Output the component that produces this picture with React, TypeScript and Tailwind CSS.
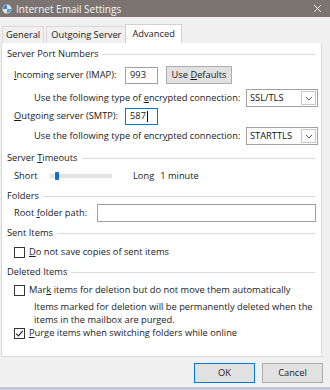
import React from "react";

const U = ({ children }: { children: React.ReactNode }) => <span className="underline underline-offset-[1px]">{children}</span>;

function GroupHeader({ title }: { title: React.ReactNode }) {
  return (
    <div className="flex h-[14px] items-center pl-[5px] pr-[6px]">
      <span className="whitespace-nowrap text-[#1a1a1a]">{title}</span>
      <div className="ml-[4px] h-px flex-1 bg-[#d9d9d9]" />
    </div>
  );
}

function Checkbox({ checked }: { checked?: boolean }) {
  return (
    <div className="flex h-[11px] w-[11px] shrink-0 items-center justify-center border border-[#333] bg-white">
      {checked && (
        <svg width="9" height="9" viewBox="0 0 9 9">
          <path d="M1.2 4.6 L3.4 6.9 L7.8 1.8" fill="none" stroke="#222" strokeWidth="1.1" />
        </svg>
      )}
    </div>
  );
}

function Select({ value }: { value: string }) {
  return (
    <div className="flex h-[18px] w-[72px] items-stretch border border-[#a0a0a0] bg-white">
      <div className="flex flex-1 items-center pl-[3px] text-[#111]">{value}</div>
      <div className="my-[1px] mr-[1px] flex w-[15px] items-center justify-center border border-[#c8c8c8] bg-white">
        <svg width="8" height="5" viewBox="0 0 8 5">
          <path d="M1 1 L4 4 L7 1" fill="none" stroke="#555" strokeWidth="1" />
        </svg>
      </div>
    </div>
  );
}

export default function App() {
  return (
    <div
      className="relative h-[390px] w-[330px] overflow-hidden whitespace-nowrap bg-[#f0f0f0] text-[9.3px] leading-[12px] text-[#1a1a1a]"
      style={{ fontFamily: '"Open Sans", "Noto Sans", sans-serif' }}
    >
      {/* Title bar */}
      <div className="flex h-[17px] items-center bg-[#7b7471] pl-[2px] pr-[8px]">
        <svg width="10" height="10" viewBox="0 0 10 10" className="shrink-0">
          <circle cx="5" cy="5" r="4.5" fill="#dfe7ee" />
          <path d="M1 5 A4 4 0 0 1 5 1 L5 5 Z" fill="#3d86c6" />
          <path d="M5 5 L9 5 A4 4 0 0 1 5 9 Z" fill="#5a9ad3" />
        </svg>
        <span className="ml-[4px] flex-1 text-[10px] text-[#f4f4f4]">Internet Email Settings</span>
        <svg width="9" height="9" viewBox="0 0 9 9">
          <path d="M1 1 L8 8 M8 1 L1 8" stroke="#f2f2f2" strokeWidth="1" />
        </svg>
      </div>

      {/* Tabs */}
      <div className="flex h-[26px] items-end pl-[2px]">
        <div className="flex h-[17px] items-center border border-b-0 border-[#d9d9d9] bg-[#f0f0f0] px-[3px]">General</div>
        <div className="ml-[2px] flex h-[17px] items-center border border-b-0 border-[#d9d9d9] bg-[#f0f0f0] px-[4px]">Outgoing Server</div>
        <div className="-ml-[1px] flex h-[19px] items-center border border-b-0 border-[#d0d0d0] bg-white px-[6px]">Advanced</div>
      </div>

      {/* Panel */}
      <div className="ml-[1px] w-[321px] border border-t-0 border-[#d9d9d9] bg-white pb-[16px] pt-[4px]">
        <GroupHeader title="Server Port Numbers" />

        <div className="mt-[5px] flex h-[18px] items-center pl-[12px]">
          <span className="w-[111px]"><U>I</U>ncoming server (IMAP):</span>
          <div className="flex h-[17px] w-[33px] items-center border border-[#a0a0a0] pl-[4px]">993</div>
          <div className="ml-[8px] flex h-[18px] w-[66px] items-center justify-center border border-[#adadad] bg-[#e1e1e1]">
            <span>Use <U>D</U>efaults</span>
          </div>
        </div>

        <div className="mt-[5px] flex h-[18px] items-center pl-[32px]">
          <span className="w-[212px]">Use the following type of <U>e</U>ncrypted connection:</span>
          <Select value="SSL/TLS" />
        </div>

        <div className="flex h-[18px] items-center pl-[12px]">
          <span className="w-[111px]"><U>O</U>utgoing server (SMTP):</span>
          <div className="flex h-[17px] w-[33px] items-center border border-[#0078d7] pl-[4px]">
            587<span className="ml-[1px] inline-block h-[11px] w-px bg-[#111]" />
          </div>
        </div>

        <div className="mt-[2px] flex h-[18px] items-center pl-[32px]">
          <span className="w-[212px]">Use the following type of encr<U>y</U>pted connection:</span>
          <Select value="STARTTLS" />
        </div>

        <div className="mt-[6px]">
          <GroupHeader title={<>Server <U>T</U>imeouts</>} />
        </div>

        <div className="mt-[4px] flex h-[14px] items-center pl-[12px]">
          <span className="w-[36px]">Short</span>
          <div className="relative flex h-[10px] w-[62px] items-center">
            <div className="h-[4px] w-full bg-[#e3e3e3]" />
            <div className="absolute left-[5px] top-[1px] h-[8px] w-[4px] rounded-[1px] bg-[#0a6fd0]" />
          </div>
          <span className="ml-[21px]">Long</span>
          <span className="ml-[6px]">1 minute</span>
        </div>

        <div className="mt-[6px]">
          <GroupHeader title="Folders" />
        </div>

        <div className="mt-[1px] flex h-[18px] items-center pl-[12px] pr-[5px]">
          <span className="w-[83px]">Root <U>f</U>older path:</span>
          <div className="h-[18px] flex-1 border border-[#a0a0a0]" />
        </div>

        <div className="mt-[4px]">
          <GroupHeader title="Sent Items" />
        </div>

        <div className="mt-[5px] flex h-[14px] items-center pl-[12px]">
          <Checkbox />
          <span className="ml-[4px]"><U>D</U>o not save copies of sent items</span>
        </div>

        <div className="mt-[6px]">
          <GroupHeader title="Deleted Items" />
        </div>

        <div className="mt-[4px] flex h-[14px] items-center pl-[12px]">
          <Checkbox />
          <span className="ml-[4px]">Mar<U>k</U> items for deletion but do not move them automatically</span>
        </div>

        <div className="mt-[4px] pl-[32px] leading-[12.5px]">
          <div>Items marked for deletion will be permanently deleted when the</div>
          <div>items in the mailbox are purged.</div>
        </div>

        <div className="flex h-[14px] items-center pl-[12px]">
          <Checkbox checked />
          <span className="ml-[4px]"><U>P</U>urge items when switching folders while online</span>
        </div>
      </div>

      {/* Buttons */}
      <div className="mt-[6px] flex justify-end gap-[7px] pr-[7px]">
        <div className="flex h-[20px] w-[61px] items-center justify-center border border-[#0078d7] bg-[#e1e1e1]">OK</div>
        <div className="flex h-[20px] w-[61px] items-center justify-center border border-[#adadad] bg-[#e1e1e1]">Cancel</div>
      </div>

      <div className="absolute bottom-0 left-0 h-[3px] w-full bg-[#c0c9d6]" />
    </div>
  );
}
